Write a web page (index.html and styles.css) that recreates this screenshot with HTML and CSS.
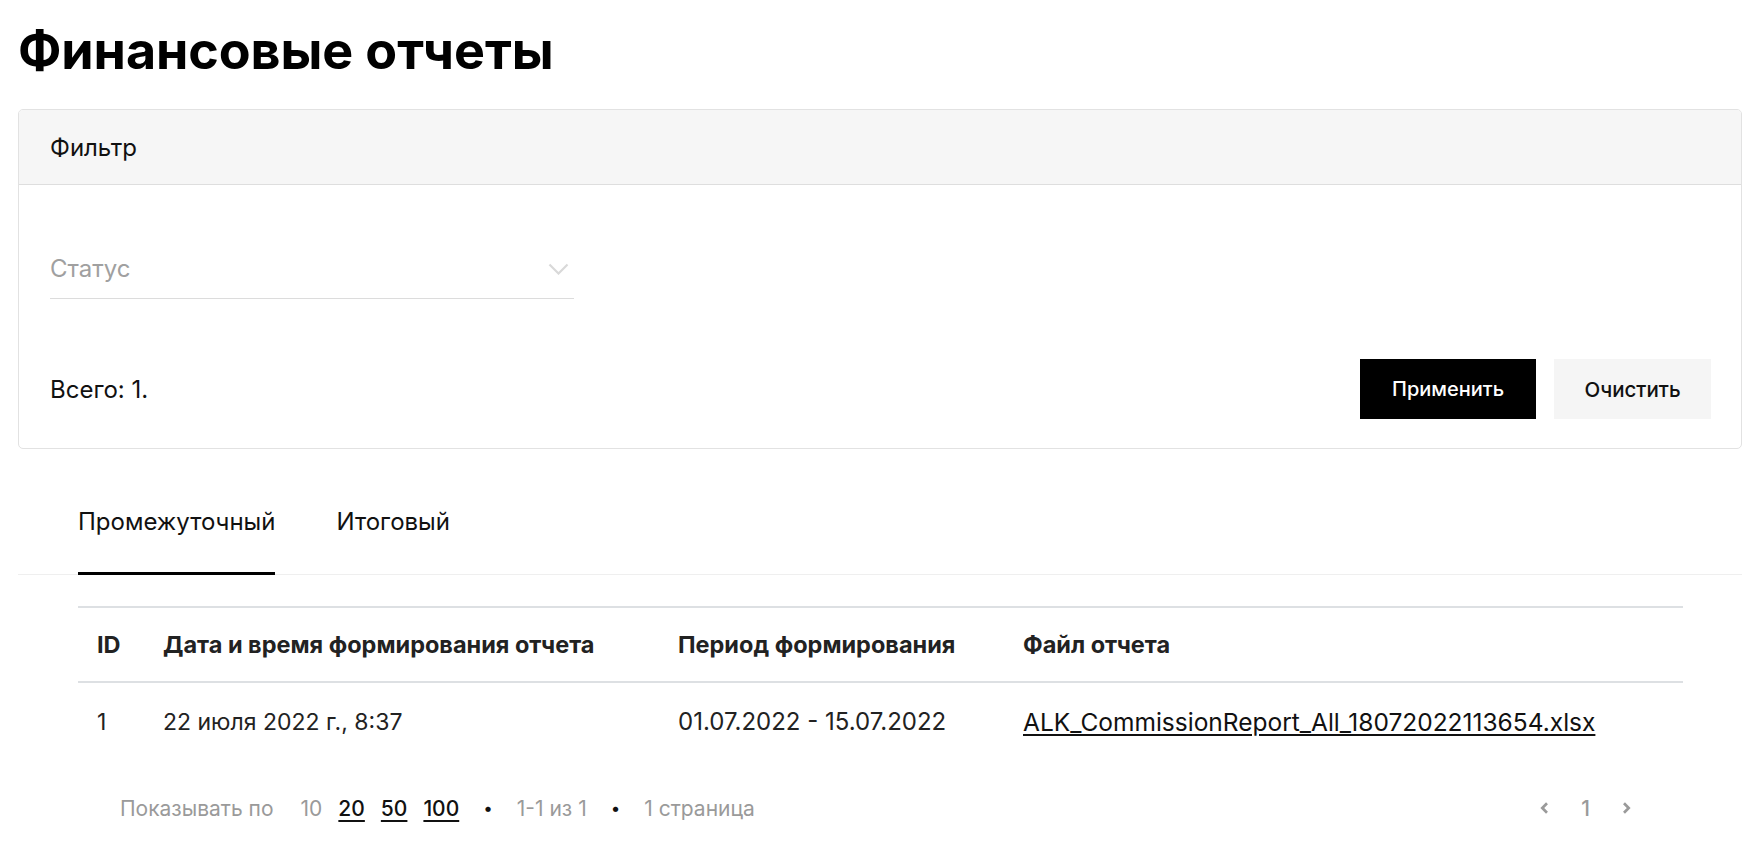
FILE: index.html
```html
<!DOCTYPE html>
<html lang="ru">
<head>
<meta charset="utf-8">
<title>Финансовые отчеты</title>
<link rel="stylesheet" href="styles.css">
</head>
<body>
<div class="page">
  <h1 class="title">Финансовые отчеты</h1>

  <section class="card">
    <div class="card-head">Фильтр</div>
    <div class="card-body">
      <div class="select">
        <span class="select-placeholder">Статус</span>
        <svg class="select-chevron" width="21" height="12" viewBox="0 0 21 12" fill="none">
          <path d="M1.5 1.5l9 9 9-9" stroke="#d9d9d9" stroke-width="2.2"/>
        </svg>
      </div>
      <div class="card-foot">
        <div class="total">Всего: 1.</div>
        <div class="actions">
          <button class="btn btn-primary">Применить</button>
          <button class="btn btn-secondary">Очистить</button>
        </div>
      </div>
    </div>
  </section>

  <nav class="tabs">
    <div class="tab tab-active">Промежуточный</div>
    <div class="tab">Итоговый</div>
  </nav>

  <div class="table-wrap">
    <table class="table">
      <colgroup>
        <col class="c-id"><col class="c-date"><col class="c-period"><col>
      </colgroup>
      <thead>
        <tr>
          <th>ID</th>
          <th>Дата и время формирования отчета</th>
          <th>Период формирования</th>
          <th>Файл отчета</th>
        </tr>
      </thead>
      <tbody>
        <tr>
          <td>1</td>
          <td>22 июля 2022 г., 8:37</td>
          <td class="num">01.07.2022 - 15.07.2022</td>
          <td><a class="file-link" href="#">ALK_CommissionReport_All_18072022113654.xlsx</a></td>
        </tr>
      </tbody>
    </table>

    <div class="pager">
      <div class="pager-left">
        <span class="muted">Показывать по</span>
        <span class="sizes">
          <span class="size size-current">10</span>
          <a class="size" href="#">20</a>
          <a class="size" href="#">50</a>
          <a class="size" href="#">100</a>
        </span>
        <span class="dot">•</span>
        <span class="muted">1-1 из 1</span>
        <span class="dot">•</span>
        <span class="muted">1 страница</span>
      </div>
      <div class="pager-right">
        <svg class="pg-arrow" width="9" height="12" viewBox="0 0 9 12" fill="none">
          <path d="M7 1.3L2.3 6L7 10.7" stroke="#9a9a9a" stroke-width="2.7"/>
        </svg>
        <span class="pg-num">1</span>
        <svg class="pg-arrow" width="9" height="12" viewBox="0 0 9 12" fill="none">
          <path d="M2 1.3L6.7 6L2 10.7" stroke="#9a9a9a" stroke-width="2.7"/>
        </svg>
      </div>
    </div>
  </div>
</div>
</body>
</html>
```

FILE: styles.css
```css
* { box-sizing: border-box; }

html, body {
  margin: 0;
  padding: 0;
  background: #fff;
}

body {
  font-family: Inter, "Noto Sans", "Liberation Sans", sans-serif;
  color: #222;
  overflow: hidden;
}

.page {
  padding: 19px 1px 0 18px;
}

.title {
  margin: 0;
  font-size: 52px;
  line-height: 64px;
  font-weight: 700;
  color: #000;
  letter-spacing: -0.1px;
}

.card {
  margin-top: 26px;
  border: 1px solid #e2e2e2;
  border-radius: 5px;
  overflow: hidden;
}

.card-head {
  height: 75px;
  display: flex;
  align-items: center;
  padding: 0 31px;
  background: #f6f6f6;
  border-bottom: 1px solid #dedede;
  font-size: 24px;
  color: #111;
}

.card-body {
  padding: 54px 30px 29px 31px;
}

.select {
  width: 524px;
  height: 60px;
  display: flex;
  align-items: center;
  justify-content: space-between;
  border-bottom: 1px solid #dcdcdc;
  padding-right: 5px;
}

.select-placeholder {
  font-size: 24px;
  color: #a0a0a0;
}

.card-foot {
  margin-top: 60px;
  display: flex;
  align-items: center;
  justify-content: space-between;
}

.total {
  font-size: 24px;
  color: #111;
}

.actions {
  display: flex;
  gap: 18px;
}

.btn {
  height: 60px;
  border: 0;
  border-radius: 0;
  font-family: inherit;
  font-size: 20px;
  font-weight: 500;
  cursor: pointer;
}

.btn-primary {
  width: 176px;
  background: #000;
  color: #fff;
}

.btn-secondary {
  width: 157px;
  background: #f5f5f5;
  color: #111;
  font-size: 20.5px;
}

.tabs {
  margin-top: 28px;
  display: flex;
  gap: 61px;
  padding-left: 60px;
  border-bottom: 1px solid #efefef;
}

.tab {
  padding: 30px 0 35px;
  line-height: 30px;
  font-size: 24px;
  color: #111;
  margin-bottom: -1px;
  border-bottom: 3px solid transparent;
}

.tab-active {
  border-bottom-color: #000;
}

.table-wrap {
  padding: 31px 59px 0 60px;
}

.table {
  width: 100%;
  border-collapse: collapse;
  table-layout: fixed;
  border-top: 2px solid #dde0e3;
}

.c-id { width: 66px; }
.c-date { width: 515px; }
.c-period { width: 345px; }

.table th,
.table td {
  text-align: left;
  padding: 0 0 0 19px;
  white-space: nowrap;
}

.table th {
  height: 75px;
  font-size: 23.5px;
  font-weight: 700;
  color: #222;
  border-bottom: 2px solid #dde0e3;
}

.table td {
  height: 78px;
  font-size: 23px;
  color: #222;
}

.table td.num {
  font-size: 24px;
}

.file-link {
  font-size: 24.5px;
  color: #111;
  text-decoration: underline;
  text-underline-offset: 3px;
}

.pager {
  display: flex;
  align-items: center;
  justify-content: space-between;
  height: 96px;
  padding: 0 52px 0 42px;
}

.pager-left {
  display: flex;
  align-items: center;
  gap: 24px;
  font-size: 21px;
}

.muted { color: #9a9a9a; }

.sizes {
  display: flex;
  align-items: center;
  gap: 16px;
  margin-left: 3px;
}

.size {
  color: #111;
  font-weight: 500;
  text-decoration: underline;
  text-decoration-thickness: 2px;
  text-underline-offset: 4px;
}

.size-current {
  color: #9a9a9a;
  font-weight: 400;
  text-decoration: none;
}

.dot {
  color: #111;
  font-size: 17px;
}

.pager-right {
  display: flex;
  align-items: center;
  gap: 32px;
}

.pg-num {
  font-size: 21px;
  font-weight: 500;
  color: #9a9a9a;
}
```
